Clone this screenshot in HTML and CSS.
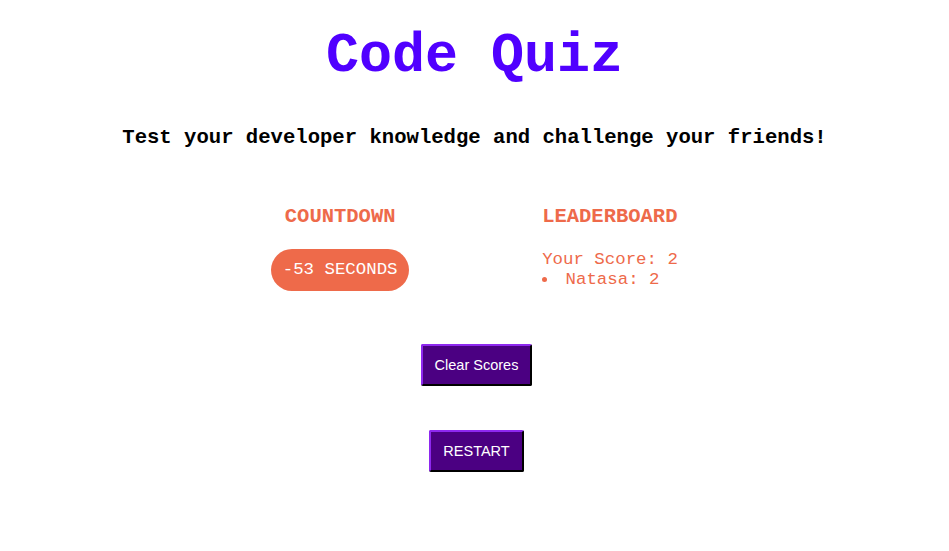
FILE: index.html
```html
<!DOCTYPE html>
<html>
<head>
<meta charset="utf-8">
<title>Code Quiz</title>
<link rel="stylesheet" href="styles.css">
</head>
<body>
<header class="header">
  <h1 class="title">Code Quiz</h1>
  <p class="subtitle">Test your developer knowledge and challenge your friends!</p>
</header>
<main class="panels">
  <section class="countdown">
    <h3 class="panel-title">COUNTDOWN</h3>
    <div class="timer">-53 SECONDS</div>
  </section>
  <section class="leaderboard">
    <h3 class="panel-title">LEADERBOARD</h3>
    <div class="score">Your Score: 2</div>
    <ul class="scores">
      <li>Natasa: 2</li>
    </ul>
  </section>
</main>
<div class="actions">
  <button class="btn btn-clear">Clear Scores</button>
  <button class="btn btn-restart">RESTART</button>
</div>
</body>
</html>
```
FILE: styles.css
```css
html, body {
  margin: 0;
  padding: 0;
  background: #ffffff;
}
body {
  font-family: "Liberation Mono", "Courier New", monospace;
  text-align: center;
  color: #000;
}
.header {
  display: flex;
  flex-direction: column;
  align-items: center;
  padding-top: 27px;
}
.title {
  margin: 0;
  font-size: 55px;
  line-height: 60px;
  font-weight: bold;
  color: #5000ff;
}
.subtitle {
  margin: 39px 0 0;
  font-size: 20.6px;
  line-height: 24px;
  font-weight: bold;
}
.panels {
  display: flex;
  justify-content: center;
  gap: 133px;
  margin-top: 55px;
}
.countdown {
  display: flex;
  flex-direction: column;
  align-items: center;
  width: 138px;
}
.leaderboard {
  display: flex;
  flex-direction: column;
  align-items: flex-start;
  text-align: left;
  color: #ee6a4a;
}
.panel-title {
  margin: 0;
  font-size: 20.5px;
  line-height: 24px;
  font-weight: bold;
  color: #ee6a4a;
}
.timer {
  margin-top: 20px;
  width: 138px;
  height: 42px;
  line-height: 42px;
  border-radius: 21px;
  background: #ee6a4a;
  color: #ffffff;
  font-size: 17.4px;
}
.score {
  margin-top: 21px;
  font-size: 17.4px;
  line-height: 20px;
}
.scores {
  margin: 0;
  padding: 0;
  list-style: disc inside;
  font-size: 17.4px;
  line-height: 20px;
}
.actions {
  display: flex;
  flex-direction: column;
  align-items: center;
  gap: 44px;
  margin-top: 53px;
  padding-left: 4px;
}
.btn {
  height: 42px;
  padding: 0 12px;
  background: #4b0082;
  color: #ffffff;
  font-family: "Liberation Sans", Arial, sans-serif;
  font-size: 14.5px;
  border: 2px outset #5c1a9a;
  border-right-color: #1e0033;
  border-bottom-color: #1e0033;
  border-radius: 2px;
}
```
